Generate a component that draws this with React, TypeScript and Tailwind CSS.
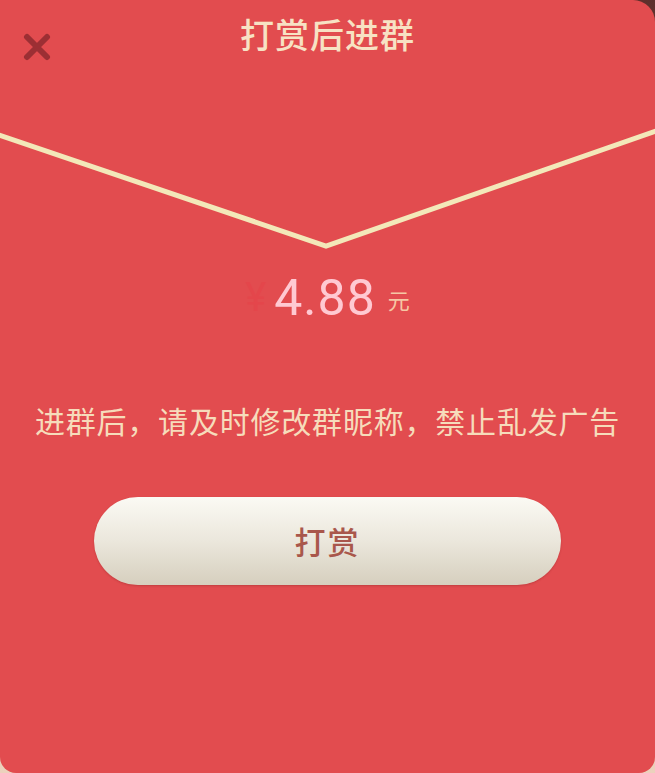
import React from 'react';

const cjk = "font-['Noto_Sans_CJK_SC','Noto_Sans',sans-serif]";

export default function App() {
    return (
        <div className="w-[655px] h-[773px] bg-gradient-to-b from-[#5e2f2c] via-[#b7675a] to-[#ecd2bd]">
            <div className={`relative w-full h-full bg-[#e24c4f] rounded-tr-[22px] rounded-b-[16px] overflow-hidden flex flex-col ${cjk}`}>
                {/* header */}
                <div className="h-[100px] relative flex justify-center">
                    <h1 className="mt-[10px] text-[34px] leading-[48px] font-medium text-[#f7e2c4] tracking-[1px]">打赏后进群</h1>
                    <button className="absolute left-[22px] top-[32px] w-[30px] h-[30px] flex items-center justify-center">
                        <svg width="28" height="28" viewBox="0 0 28 28">
                            <path d="M4 4 L24 24 M24 4 L4 24" stroke="#9c2f34" strokeWidth="6" strokeLinecap="round" />
                        </svg>
                    </button>
                </div>

                {/* envelope flap line */}
                <svg width="655" height="160" viewBox="0 0 655 160" className="block shrink-0">
                    <polyline points="-4,34 326,146 659,30" fill="none" stroke="#f3e8b9" strokeWidth="5" strokeLinejoin="miter" />
                </svg>

                {/* amount */}
                <div className="h-[66px] flex items-end justify-center">
                    <span className="text-[40px] leading-[56px] text-[#e4464b] mr-[8px] font-['Roboto',sans-serif]">¥</span>
                    <span className="text-[50px] leading-[56px] text-[#ffc9d2] font-['Roboto',sans-serif] tracking-[1px]">4.88</span>
                    <span className="text-[22px] leading-[30px] text-[#f6c7a4] ml-[12px] mb-[12px]">元</span>
                </div>

                {/* notice */}
                <p className="mt-[72px] text-center text-[30px] leading-[44px] text-[#f6dcbb] tracking-[0.8px]">
                    进群后，请及时修改群昵称，禁止乱发广告
                </p>

                {/* button */}
                <div className="mt-[55px] flex justify-center">
                    <button className="w-[467px] h-[88px] rounded-full bg-gradient-to-b from-[#fbfaf4] via-[#ebe7dc] to-[#d6cfbe] shadow-[0_1px_2px_rgba(120,30,30,0.3)] text-[31px] text-[#a9574b] font-medium tracking-[2px]">
                        打赏
                    </button>
                </div>
            </div>
        </div>
    );
}
